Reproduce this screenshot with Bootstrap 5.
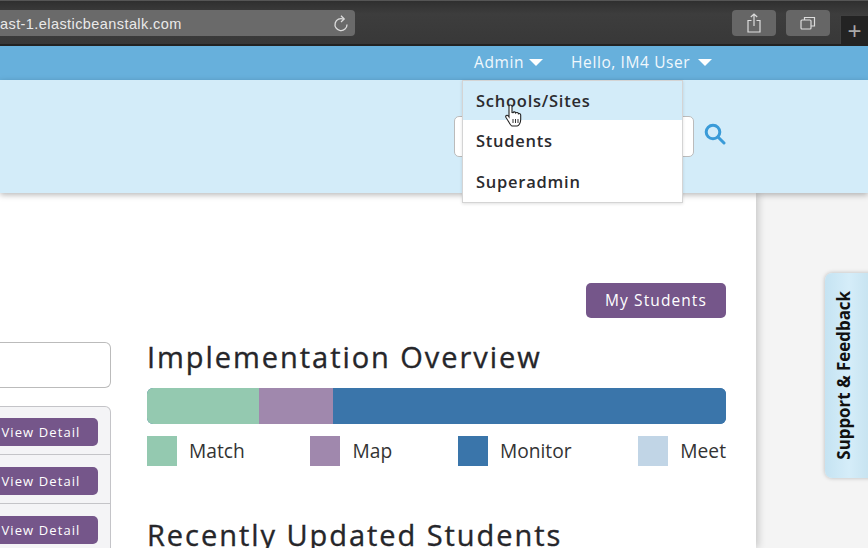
<!DOCTYPE html>
<html lang="en">
<head>
<meta charset="utf-8">
<title>Dashboard</title>
<link href="https://cdn.jsdelivr.net/npm/bootstrap@5.3.0/dist/css/bootstrap.min.css" rel="stylesheet">
<style>
html,body{height:548px;overflow:hidden}
body{width:868px;background:#f4f4f4;font-family:"Open Sans",sans-serif;color:#2b2b2f;position:relative}
.chrome-bar{height:46px;background:linear-gradient(#2f2f2f,#3d3d3d 30%,#383838);border-top:1px solid #555;border-bottom:2px solid #222;padding-top:9px}
.addr{width:355px;height:26px;background:#6a6a6a;border-radius:0 4px 4px 0;color:#e9e9e9;font:14.500px "Liberation Sans",sans-serif;letter-spacing:.42px;padding:1px 6px 0 0}
.tool-btn{width:44px;height:26px;background:#666;border-radius:4px}
.tab-plus{width:28px;height:29px;background:#232323;border:1px solid #3f3f3f;border-right:0;border-bottom:0;color:#aaa;font:24px/30px "Liberation Sans",sans-serif;margin:5px 0 0 10px;text-align:center}
.tool-wrap{gap:10px}
.nav-strip{height:34px;background:#67b0dc;color:#f1f8fc;font-size:15.5px;letter-spacing:.6px;padding-left:474px;gap:28px}
.caret-shape{display:inline-block;border:7px solid transparent;border-top:7px solid #fff;border-bottom:0;margin-left:5px;vertical-align:2px}
.greet-caret{margin-left:3px}
.sub-strip{height:113px;background:#d3ecf9;box-shadow:0 2px 6px rgba(0,0,0,.28);position:relative;padding:36px 0 0 454px}
.search-field{width:240px;height:41px;border:1px solid #bbb;background:#fff;border-radius:5px}
.search-ico{margin:7px 0 0 10px}
.admin-menu.dropdown-menu{position:absolute;left:462px;top:80px;width:221px;height:123px;padding:0;margin:0;border:1px solid #d4d4d4;border-radius:0;z-index:5;font-size:16.5px;letter-spacing:.75px;box-shadow:0 1px 3px rgba(0,0,0,.12)}
.admin-menu .dropdown-item{height:41px;padding:2px 13px 0;display:flex;align-items:center;font-weight:600;color:#2b2b2f}
.admin-menu .dropdown-item.current{background:#d3ecf9;height:39px;padding-top:1px}
.hand{position:absolute;left:503px;top:104px;z-index:6}
.main-panel{width:756px;height:355px;background:#fff;box-shadow:2px 0 8px rgba(0,0,0,.2);padding:90px 30px 0 0;overflow:hidden}
.btn.purple-btn{background:#75568a;color:#fff;border:0;border-radius:5px;letter-spacing:1.1px}
.my-btn{width:140px;height:35px;font-size:15.5px;padding:0}
.cols{gap:36px;margin-top:24px}
.left-col{width:111px;flex:none}
.right-col{width:579px;flex:none}
.find-field{height:46px;border:1px solid #bbb;border-left:0;border-radius:0 6px 6px 0;margin-bottom:18px}
.detail-list{border-radius:0 6px 6px 0;margin-left:-12px;width:123px}
.detail-list .list-group-item{background:#f4f4f6;border-color:#c4c4c8;border-left:0;height:49px;padding:12px 12px 0 0;text-align:right}
.detail-list .list-group-item:first-child{padding-top:11px}
.detail-btn{width:110px;height:28px;font-size:13px;padding:1px 4px 0 0;letter-spacing:1.3px}
.title-big{font:400 29px/1 "Open Sans",sans-serif;letter-spacing:1.95px;margin:0;color:#26262a;-webkit-text-stroke:.35px #26262a;white-space:nowrap}
.stack-bar.progress{height:36px;border-radius:6px;margin-top:17px;background:#3a75aa}
.seg-a{background:#94c9b0}.seg-b{background:#a088ad}.seg-c{background:#3a75aa}.seg-d{background:#c1d5e6}
.key-row{margin-top:12px;font-size:19.2px;color:#333;height:30px;margin-bottom:54px}
.key-sq{width:30px;height:30px;margin-right:12px}
.key-shift{margin-left:-1px}
.side-tab{position:absolute;left:825px;top:273px;width:60px;height:205px;background:linear-gradient(90deg,#c5e3f2,#d5edf9 40%,#bcdbe9);border-radius:7px;box-shadow:0 0 4px rgba(0,0,0,.25);font-weight:700;font-size:16.9px;color:#111;padding-left:6px}
.side-label{writing-mode:vertical-rl;transform:rotate(180deg);white-space:nowrap}
</style>
</head>
<body>
<div class="chrome-bar d-flex justify-content-between">
  <div class="addr d-flex align-items-center justify-content-between">
    <span>ast-1.elasticbeanstalk.com</span>
    <svg width="16" height="17" viewBox="0 0 16 17" fill="none" stroke="#ddd" stroke-width="1.3"><path d="M10.5 4.2A6 6 0 1 0 14 9.5"/><path d="M8 .8 11.2 4 8 7"/></svg>
  </div>
  <div class="d-flex">
    <div class="d-flex tool-wrap">
      <div class="tool-btn d-flex align-items-center justify-content-center"><svg width="14" height="20" viewBox="0 0 14 20" fill="none" stroke="#ddd" stroke-width="1.2"><path d="M4.500 7.500H1v11.500h12V7.500H9.500M7 13V1M3.800 4 7 1l3.200 3"/></svg></div>
      <div class="tool-btn d-flex align-items-center justify-content-center"><svg width="16" height="14" viewBox="0 0 16 14" fill="none" stroke="#ddd" stroke-width="1.2"><rect x="1" y="4" width="10" height="9" rx="1"/><path d="M4.500 4V1.500h10V10H11"/></svg></div>
    </div>
    <div class="tab-plus">+</div>
  </div>
</div>
<div class="nav-strip d-flex align-items-center">
  <span>Admin<i class="caret-shape"></i></span>
  <span>Hello, IM4 User <i class="caret-shape greet-caret"></i></span>
</div>
<div class="sub-strip d-flex">
  <div class="search-field"></div>
  <svg class="search-ico" width="22" height="22" viewBox="0 0 22 22" fill="none" stroke="#3a9bd8" stroke-width="3"><circle cx="9" cy="9" r="6.800"/><path d="m14 14 6 6" stroke-linecap="round"/></svg>
</div>
<ul class="dropdown-menu show admin-menu list-unstyled">
  <li><a class="dropdown-item current" href="#">Schools/Sites</a></li>
  <li><a class="dropdown-item" href="#">Students</a></li>
  <li><a class="dropdown-item" href="#">Superadmin</a></li>
</ul>
<svg class="hand" width="21" height="23" viewBox="0 0 21 23"><path d="M6 2.500c0-2 3-2 3 0v6l1 .2c.5-1.200 2.500-1 2.700.300.700-.9 2.500-.7 2.700.700.900-.6 2.300 0 2.300 1.300v4.500c0 3-1.700 6-3.500 6.500H9C7.500 22 6 18 3 13.500c-1-1.700 1-3 2.200-1.700L6 13z" fill="#fff" stroke="#222" stroke-width="1.100"/><path d="M10 15v4M12.500 15v4M15 15v4" stroke="#333" stroke-width="1"/></svg>
<main class="main-panel">
  <div class="d-flex justify-content-end"><button class="btn purple-btn my-btn" type="button">My Students</button></div>
  <div class="d-flex cols">
    <div class="left-col">
      <div class="find-field bg-white"></div>
      <div class="list-group detail-list">
        <div class="list-group-item"><button class="btn purple-btn detail-btn" type="button">View Detail</button></div>
        <div class="list-group-item"><button class="btn purple-btn detail-btn" type="button">View Detail</button></div>
        <div class="list-group-item"><button class="btn purple-btn detail-btn" type="button">View Detail</button></div>
      </div>
    </div>
    <div class="right-col">
      <h2 class="title-big">Implementation Overview</h2>
      <div class="progress stack-bar">
        <div class="progress-bar seg-a" style="width:19.35%"></div>
        <div class="progress-bar seg-b" style="width:12.78%"></div>
        <div class="progress-bar seg-c" style="width:67.87%"></div>
      </div>
      <div class="d-flex justify-content-between key-row">
        <div class="d-flex align-items-center"><span class="key-sq seg-a"></span>Match</div>
        <div class="d-flex align-items-center key-shift"><span class="key-sq seg-b"></span>Map</div>
        <div class="d-flex align-items-center key-shift"><span class="key-sq seg-c"></span>Monitor</div>
        <div class="d-flex align-items-center"><span class="key-sq seg-d"></span>Meet</div>
      </div>
      <h2 class="title-big">Recently Updated Students</h2>
    </div>
  </div>
</main>
<aside class="side-tab d-flex align-items-center"><span class="side-label">Support &amp; Feedback</span></aside>
<script src="https://cdn.jsdelivr.net/npm/bootstrap@5.3.0/dist/js/bootstrap.bundle.min.js"></script>
</body>
</html>
